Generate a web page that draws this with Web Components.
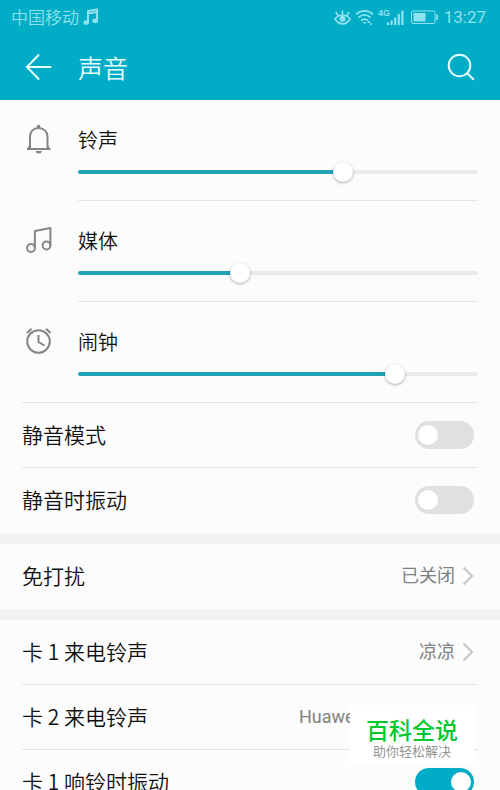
<!DOCTYPE html>
<html lang="zh-CN">
<head>
<meta charset="utf-8">
<meta name="viewport" content="width=device-width, initial-scale=1">
<title>声音</title>
<style>
  :root {
    --accent: #00acc6;
    --page: #fcfcfc;
    --line: #e4e4e4;
    --gutter: 22px;
  }
  html, body { height: 100%; }
  body {
    margin: 0;
    overflow: hidden;
    background: var(--page);
    color: #111;
    font: 350 21px/30px "Noto Sans CJK SC", sans-serif;
  }
</style>
</head>
<body>
<sound-screen></sound-screen>

<script>
const define = (name, html, setup) => customElements.define(name, class extends HTMLElement {
  connectedCallback() {
    if (this.shadowRoot) return;
    const t = document.createElement('template');
    t.innerHTML = html;
    this.attachShadow({ mode: 'open' }).append(t.content.cloneNode(true));
    if (setup) setup(this, this.shadowRoot);
  }
});

define('status-bar', `
  <style>
    :host { display: flex; align-items: center; justify-content: space-between; height: 34px;
      padding: 0 14px 0 11px; color: #8fe3ee; font-size: 17px; line-height: 34px; }
    div { display: flex; align-items: center; }
    .left { gap: 4px; }
    .right { gap: 4px; }
    time { font-family: Roboto, sans-serif; font-weight: 400; margin-left: 2px; }
    svg { display: block; fill: none; stroke: currentColor; }
    .solid { fill: currentColor; stroke: none; }
    text { font: 700 9px "Liberation Sans Narrow", "Liberation Sans", sans-serif; }
  </style>
  <div class="left"><span>中国移动</span>
    <svg width="16" height="18" viewBox="0 0 16 18" aria-hidden="true">
      <path stroke-width="2" d="M5 14V3l9-1.500v10.500M5 5.500l9-1.500"/>
      <ellipse class="solid" cx="3.200" cy="14.500" rx="2.800" ry="2.300"/><ellipse class="solid" cx="12.200" cy="12.800" rx="2.800" ry="2.300"/>
    </svg>
  </div>
  <div class="right">
    <svg width="17" height="17" viewBox="0 0 17 17" aria-hidden="true">
      <path stroke-width="1.700" d="M1 10c2-2.700 4.500-4 7.500-4s5.500 1.300 7.500 4c-2 3.300-4.500 4.800-7.500 4.800S3 13.300 1 10zM8.500 5.500V1.500M4 6.500L1.800 3M13 6.500l2.200-3.500"/>
      <circle class="solid" cx="8.500" cy="9.800" r="3"/>
    </svg>
    <svg width="19" height="17" viewBox="0 0 19 17" aria-hidden="true">
      <path stroke-width="1.700" d="M1 5.300c5-4.600 12-4.600 17 0M3.500 8.500c4-3.500 8-3.500 12 0M6.200 11.500c2.300-1.900 4.300-1.900 6.600 0"/>
      <path class="solid" d="M8 13h3.200l-1.600 2.500zM12 14l2-2.500 1.500 2.500zM14.500 14.500h3l-1.500 2z"/>
    </svg>
    <svg width="26" height="17" viewBox="0 0 26 17" aria-hidden="true">
      <text class="solid" x="0" y="7">4G</text>
      <path stroke-width="2.200" d="M10 16v-2.500M13.600 16v-4.500M17.200 16V8.500M20.800 16V5M24.400 16V1.500"/>
    </svg>
    <svg width="30" height="15" viewBox="0 0 30 15" aria-hidden="true">
      <rect x="3.500" y="1" width="23.500" height="12.500" rx="1.500"/>
      <path class="solid" d="M5.500 3h12v8.500h-12zM28.200 4.500h1.800v5.500h-1.800z"/>
    </svg>
    <time>13:27</time>
  </div>`);

define('title-bar', `
  <style>
    :host { display: grid; grid-template-columns: 56px 1fr auto; align-items: center; height: 66px;
      padding: 0 var(--gutter); color: #e6ffff; }
    h1 { margin: 0; font-size: 25px; line-height: 36px; font-weight: 350; }
    button { display: block; padding: 0; border: 0; background: none; color: inherit; }
    svg { display: block; fill: none; stroke: currentColor; stroke-width: 2; stroke-linecap: round; }
  </style>
  <button aria-label="返回"><svg width="32" height="32" viewBox="0 0 32 32"><path d="M16.500 4L5 16l11.500 12M5 16h23.500"/></svg></button>
  <h1><slot></slot></h1>
  <button aria-label="搜索"><svg width="34" height="34" viewBox="0 0 34 34"><circle cx="15.500" cy="15.500" r="10.800"/><path d="M23.300 23.300l6 6"/></svg></button>`);

define('volume-row', `
  <style>
    :host { display: grid; grid-template-columns: 56px 1fr; height: 101px; box-sizing: border-box;
      margin: 0 var(--gutter); padding-top: 25px; grid-template-rows: 30px 1fr; }
    ::slotted(svg) { display: block; align-self: center; width: 32px; height: 32px; fill: none; stroke: #858585; stroke-width: 2; }
    label { font-size: 20px; line-height: 30px; }
    .control { grid-column: 2; border-bottom: 1px solid var(--line); padding-top: 7px; }
    :host([last]) .control { grid-column: 1 / 3; padding-left: 56px; }
    input { appearance: none; display: block; width: 100%; height: 20px; margin: 0; background: none; }
    input::-webkit-slider-runnable-track { height: 4px; border-radius: 2px;
      background: linear-gradient(90deg, #1fa2b5 var(--v), #eaeaea var(--v)); }
    input::-webkit-slider-thumb { appearance: none; width: 20px; height: 20px; margin-top: -8px;
      border-radius: 50%; background: #fff; box-shadow: 0 1px 3px #0005; }
  </style>
  <slot name="icon"></slot>
  <label for="r"></label>
  <div class="control"><input id="r" type="range" min="0" max="100" step="0.1"></div>`,
  (host, root) => {
    root.querySelector('label').textContent = host.getAttribute('label');
    const input = root.querySelector('input');
    const paint = () => input.style.setProperty('--v', input.value + '%');
    input.value = host.getAttribute('value');
    input.addEventListener('input', paint);
    paint();
  });

define('settings-group', `
  <style>
    :host { display: block; background: var(--page); }
    :host(:not(:first-of-type)) { border-top: 11px solid #f2f2f2; }
  </style><slot></slot>`);

define('switch-row', `
  <style>
    :host { display: block; margin: 0 var(--gutter); border-bottom: 1px solid var(--line); }
    :host(:last-of-type) { border-color: transparent; }
    label { display: flex; align-items: center; justify-content: space-between; height: 64px; padding-right: 4px; }
    .name { padding-bottom: 2px; }
    input { appearance: none; flex: none; display: flex; width: 59px; height: 28px; margin: 0; padding: 4px 3px;
      box-sizing: border-box; border-radius: 14px; background: #e0e0e0; }
    input::before { content: ""; width: 20px; height: 20px; border-radius: 50%; background: #fff; }
    input:checked { background: var(--accent); justify-content: flex-end; }
  </style>
  <label><span class="name"><slot></slot></span><input type="checkbox" role="switch"></label>`,
  (host, root) => { root.querySelector('input').checked = host.hasAttribute('checked'); });

define('link-row', `
  <style>
    :host { display: block; margin: 0 var(--gutter); border-bottom: 1px solid var(--line); }
    :host(:only-child) { border-color: transparent; }
    a { display: flex; align-items: center; height: 64px; padding-right: 4px; color: inherit; text-decoration: none; }
    .name { padding-bottom: 2px; }
    .value { margin-left: auto; margin-right: 7px; color: #808080; font-size: 18px; font-family: Roboto, "Noto Sans CJK SC", sans-serif; font-weight: 400; }
    :host([wide]) .value { min-width: 156px; }
    svg { display: block; fill: none; stroke: #c4c4c4; stroke-width: 2; }
  </style>
  <a href="#"><span class="name"><slot></slot></span><span class="value"></span>
    <svg width="12" height="20" viewBox="0 0 12 20" aria-hidden="true"><path d="M1.500 1.500l8.500 8.500-8.500 8.500"/></svg></a>`,
  (host, root) => { root.querySelector('.value').textContent = host.getAttribute('value'); });

define('site-badge', `
  <style>
    :host { position: fixed; right: 26px; bottom: 24px; width: 124px; height: 61px; box-sizing: border-box;
      padding-top: 9px; background: #fff; text-align: center; }
    strong, span { display: block; }
    strong { color: #00c82d; font-size: 23px; line-height: 30px; font-weight: 500; }
    span { color: #8a8a8a; font-size: 13px; line-height: 14px; }
  </style>
  <strong>百科全说</strong><span>助你轻松解决</span>`);

define('sound-screen', `
  <style>
    :host { display: flex; flex-direction: column; height: 100vh; }
    header { flex: none; background: var(--accent); }
    main { flex: 1; min-height: 0; overflow-y: auto; scrollbar-width: none; }
  </style>
  <header><status-bar></status-bar><title-bar>声音</title-bar></header>
  <main>
    <settings-group>
      <volume-row label="铃声" value="67">
        <svg slot="icon" viewBox="0 1 32 32"><path d="M8 25V13.500C8 8.500 11.500 5 16.500 5S25.500 8.500 25.500 13.500V25M5 26h23.500M6.500 25.500L8 23M27 25.500L25.500 23"/><circle cx="16.500" cy="3.500" r="1.800" fill="#858585" stroke="none"/><path fill="#858585" stroke="none" d="M13.500 28h6.500c-.500 1.800-1.500 2.500-3.200 2.500s-2.800-.700-3.300-2.500z"/></svg>
      </volume-row>
      <volume-row label="媒体" value="39.9">
        <svg slot="icon" viewBox="0 1 32 32"><circle cx="9" cy="24" r="3.900"/><circle cx="24.500" cy="21.500" r="3.900"/><path stroke-linejoin="round" d="M12.900 24V7l15.500-3v17.500"/></svg>
      </volume-row>
      <volume-row label="闹钟" value="80.7" last>
        <svg slot="icon" viewBox="0 1 32 32"><circle cx="16.500" cy="16.500" r="11.300"/><path d="M16.500 10v7l6 3.500M5 8l4.500-4.300M28.500 8L24 3.700"/></svg>
      </volume-row>
      <switch-row>静音模式</switch-row>
      <switch-row>静音时振动</switch-row>
    </settings-group>
    <settings-group>
      <link-row value="已关闭">免打扰</link-row>
    </settings-group>
    <settings-group>
      <link-row value="凉凉">卡 1 来电铃声</link-row>
      <link-row value="Huawei" wide>卡 2 来电铃声</link-row>
      <switch-row checked>卡 1 响铃时振动</switch-row>
    </settings-group>
  </main>
  <site-badge></site-badge>`);
</script>
</body>
</html>
